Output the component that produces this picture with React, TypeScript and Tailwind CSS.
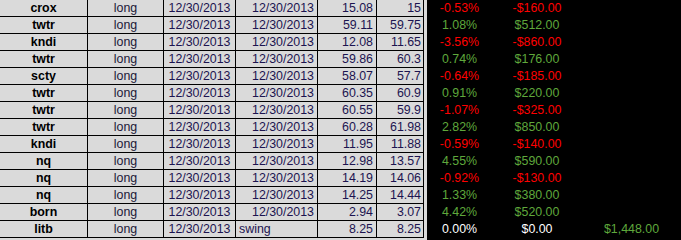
import React from "react";

type Row = {
  sym: string;
  exit: string;
  entry: string;
  close: string;
  pct: string;
  amt: string;
  tone: "red" | "green" | "white";
  total?: string;
};

const rows: Row[] = [
  { sym: "crox", exit: "12/30/2013", entry: "15.08", close: "15", pct: "-0.53%", amt: "-$160.00", tone: "red" },
  { sym: "twtr", exit: "12/30/2013", entry: "59.11", close: "59.75", pct: "1.08%", amt: "$512.00", tone: "green" },
  { sym: "kndi", exit: "12/30/2013", entry: "12.08", close: "11.65", pct: "-3.56%", amt: "-$860.00", tone: "red" },
  { sym: "twtr", exit: "12/30/2013", entry: "59.86", close: "60.3", pct: "0.74%", amt: "$176.00", tone: "green" },
  { sym: "scty", exit: "12/30/2013", entry: "58.07", close: "57.7", pct: "-0.64%", amt: "-$185.00", tone: "red" },
  { sym: "twtr", exit: "12/30/2013", entry: "60.35", close: "60.9", pct: "0.91%", amt: "$220.00", tone: "green" },
  { sym: "twtr", exit: "12/30/2013", entry: "60.55", close: "59.9", pct: "-1.07%", amt: "-$325.00", tone: "red" },
  { sym: "twtr", exit: "12/30/2013", entry: "60.28", close: "61.98", pct: "2.82%", amt: "$850.00", tone: "green" },
  { sym: "kndi", exit: "12/30/2013", entry: "11.95", close: "11.88", pct: "-0.59%", amt: "-$140.00", tone: "red" },
  { sym: "nq", exit: "12/30/2013", entry: "12.98", close: "13.57", pct: "4.55%", amt: "$590.00", tone: "green" },
  { sym: "nq", exit: "12/30/2013", entry: "14.19", close: "14.06", pct: "-0.92%", amt: "-$130.00", tone: "red" },
  { sym: "nq", exit: "12/30/2013", entry: "14.25", close: "14.44", pct: "1.33%", amt: "$380.00", tone: "green" },
  { sym: "born", exit: "12/30/2013", entry: "2.94", close: "3.07", pct: "4.42%", amt: "$520.00", tone: "green" },
  { sym: "litb", exit: "swing", entry: "8.25", close: "8.25", pct: "0.00%", amt: "$0.00", tone: "white", total: "$1,448.00" },
];

const toneClass = {
  red: "text-[#ff0000]",
  green: "text-[#5fa83c]",
  white: "text-white",
};

export default function App() {
  return (
    <div
      className="flex w-[681px] h-[240px] bg-black overflow-hidden text-[12.4px] leading-[14px]"
      style={{ fontFamily: '"Liberation Sans", Arial, sans-serif' }}
    >
      <div className="w-[427px] h-full bg-[#dadada] flex flex-col">
        {rows.map((r, i) => (
          <div key={i} className="flex h-[17px] w-[424px] border-b border-black">
            <div className="w-[88px] border-r border-black flex items-end justify-center font-bold text-black pb-[1px]">
              {r.sym}
            </div>
            <div className="w-[76px] border-r border-black flex items-end justify-center text-[#1c1838] pb-[1px]">
              long
            </div>
            <div className="w-[72px] border-r border-black flex items-end justify-center text-[#1c1450] pb-[1px]">
              12/30/2013
            </div>
            {r.exit === "swing" ? (
              <div className="w-[82px] border-r border-black flex items-end justify-start pl-[3px] text-[#1c1450] pb-[1px]">
                swing
              </div>
            ) : (
              <div className="w-[82px] border-r border-black flex items-end justify-end pr-[3px] text-[#1c1450] pb-[1px]">
                {r.exit}
              </div>
            )}
            <div className="w-[59px] border-r border-black flex items-end justify-end pr-[3px] text-[#1c1450] pb-[1px]">
              {r.entry}
            </div>
            <div className="w-[47px] border-r border-black flex items-end justify-end pr-[2px] text-[#1c1450] pb-[1px]">
              {r.close}
            </div>
          </div>
        ))}
      </div>
      <div className="flex-1 h-full flex flex-col">
        {rows.map((r, i) => (
          <div key={i} className="flex h-[17px]">
            <div className={`w-[65px] flex items-end justify-center pb-[2px] ${toneClass[r.tone]}`}>{r.pct}</div>
            <div className={`w-[90px] flex items-end justify-center pb-[2px] ${toneClass[r.tone]}`}>{r.amt}</div>
            <div className="w-[99px] flex items-end justify-center pb-[2px] text-[#5fa83c]">{r.total ?? ""}</div>
          </div>
        ))}
      </div>
    </div>
  );
}
